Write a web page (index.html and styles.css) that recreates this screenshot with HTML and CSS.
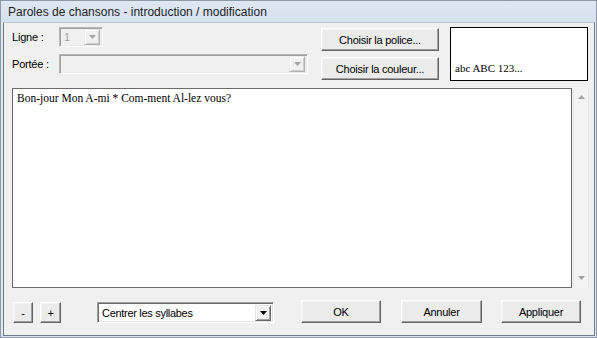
FILE: index.html
```html
<!DOCTYPE html>
<html lang="fr">
<head>
<meta charset="utf-8">
<title>Paroles de chansons</title>
<link rel="stylesheet" href="styles.css">
</head>
<body>
<div class="window">
  <div class="titlebar">Paroles de chansons - introduction / modification</div>
  <div class="client">
    <div class="top">
      <div class="fields">
        <div class="field-row">
          <span class="label">Ligne :</span>
          <div class="combo combo-disabled combo-ligne">
            <span class="combo-value">1</span>
            <span class="drop"><svg width="7" height="4" viewBox="0 0 7 4"><polygon points="0,0 7,0 3.5,4" class="arrow-dis"/></svg></span>
          </div>
        </div>
        <div class="field-row row-portee">
          <span class="label">Portée :</span>
          <div class="combo combo-disabled combo-portee">
            <span class="combo-value"></span>
            <span class="drop"><svg width="7" height="4" viewBox="0 0 7 4"><polygon points="0,0 7,0 3.5,4" class="arrow-dis"/></svg></span>
          </div>
        </div>
      </div>
      <div class="font-buttons">
        <button class="btn btn-wide">Choisir la police...</button>
        <button class="btn btn-wide">Choisir la couleur...</button>
      </div>
      <div class="preview"><span class="preview-text">abc ABC 123...</span></div>
    </div>
    <div class="editor">
      <div class="textbox">Bon-jour Mon A-mi * Com-ment Al-lez vous?</div>
      <div class="scrollbar">
        <svg width="7" height="4" viewBox="0 0 7 4"><polygon points="3.5,0 7,4 0,4" class="arrow-dis"/></svg>
        <svg width="7" height="4" viewBox="0 0 7 4"><polygon points="0,0 7,0 3.5,4" class="arrow-dis"/></svg>
      </div>
    </div>
    <div class="bottom">
      <button class="btn btn-small">-</button>
      <button class="btn btn-small btn-plus">+</button>
      <div class="combo combo-white">
        <span class="combo-value">Centrer les syllabes</span>
        <span class="drop"><svg width="7" height="4" viewBox="0 0 7 4"><polygon points="0,0 7,0 3.5,4" class="arrow"/></svg></span>
      </div>
      <button class="btn btn-dialog btn-ok">OK</button>
      <button class="btn btn-dialog btn-cancel">Annuler</button>
      <button class="btn btn-dialog btn-apply">Appliquer</button>
    </div>
  </div>
</div>
</body>
</html>
```

FILE: styles.css
```css
html, body {
  margin: 0;
  padding: 0;
  background: #ffffff;
}

.window {
  width: 597px;
  height: 338px;
  box-sizing: border-box;
  border: 1px solid #8d99a7;
  background: #dfe7f1;
  display: flex;
  flex-direction: column;
  font-family: "Liberation Sans", Arial, sans-serif;
  font-size: 11px;
  color: #000;
}

.titlebar {
  height: 21px;
  line-height: 22px;
  padding-left: 7px;
  font-size: 12px;
  color: #1e1e1e;
  background: linear-gradient(#dee7f2, #d6e1ee);
  white-space: nowrap;
}

.client {
  flex: 1;
  margin: 0 1px 1px 2px;
  border: 1px solid #6f7b89;
  border-top-color: #b9c6d5;
  background: #f0f0f0;
  display: flex;
  flex-direction: column;
}

/* ---------- top section ---------- */
.top {
  display: flex;
  align-items: flex-start;
  padding: 4px 0 0 8px;
  height: 54px;
}

.fields {
  width: 296px;
  display: flex;
  flex-direction: column;
}

.field-row {
  display: flex;
  align-items: center;
  height: 20px;
}

.row-portee {
  margin-top: 7px;
}

.label {
  width: 47px;
  letter-spacing: -0.2px;
  white-space: nowrap;
}

.combo {
  box-sizing: border-box;
  height: 20px;
  display: flex;
  align-items: center;
  border: 1px solid;
  border-color: #a0a0a0 #ffffff #ffffff #a0a0a0;
  box-shadow: inset 1px 1px 0 #696969, inset -1px -1px 0 #e3e3e3;
  padding: 1px 2px 1px 2px;
}

.combo-disabled {
  background: #f0f0f0;
  border-color: #b4b4b4 #ffffff #ffffff #b4b4b4;
  box-shadow: inset 1px 1px 0 #a0a0a0, inset -1px -1px 0 #e8e8e8;
}

.combo-ligne {
  width: 44px;
}

.combo-portee {
  width: 249px;
}

.combo-value {
  flex: 1;
  padding-left: 2px;
  white-space: nowrap;
  letter-spacing: -0.3px;
}

.combo-disabled .combo-value {
  color: #a0a0a0;
}

.drop {
  box-sizing: border-box;
  width: 16px;
  height: 16px;
  display: flex;
  align-items: center;
  justify-content: center;
  background: #f0f0f0;
  border: 1px solid;
  border-color: #e3e3e3 #696969 #696969 #e3e3e3;
  box-shadow: inset 1px 1px 0 #ffffff, inset -1px -1px 0 #a0a0a0;
}

.combo-disabled .drop {
  border-color: #ececec #b0b0b0 #b0b0b0 #ececec;
  box-shadow: inset 1px 1px 0 #ffffff, inset -1px -1px 0 #cfcfcf;
}

.arrow {
  fill: #000000;
}

.arrow-dis {
  fill: #a3a3a3;
}

.font-buttons {
  margin-left: 13px;
  padding-top: 1px;
  display: flex;
  flex-direction: column;
  gap: 6px;
}

.btn {
  box-sizing: border-box;
  font-family: "Liberation Sans", Arial, sans-serif;
  font-size: 11px;
  letter-spacing: -0.25px;
  color: #000;
  background: #ebebeb;
  border: 1px solid;
  border-color: #ffffff #646464 #646464 #ffffff;
  box-shadow: inset -1px -1px 0 #a0a0a0, inset 1px 1px 0 #f4f4f4;
  padding: 0;
  margin: 0;
  display: flex;
  align-items: center;
  justify-content: center;
}

.btn-wide {
  width: 118px;
  height: 23px;
}

.preview {
  box-sizing: border-box;
  margin-left: 11px;
  width: 138px;
  height: 54px;
  background: #ffffff;
  border: 1px solid #000000;
  display: flex;
  align-items: flex-end;
  padding: 0 0 5px 4px;
}

.preview-text {
  font-family: "Liberation Serif", "Times New Roman", serif;
  font-size: 11px;
  line-height: 13px;
  white-space: nowrap;
}

/* ---------- editor ---------- */
.editor {
  display: flex;
  margin-top: 7px;
  padding-left: 8px;
}

.textbox {
  box-sizing: border-box;
  width: 560px;
  height: 200px;
  background: #ffffff;
  border: 1px solid #6b6b6b;
  padding: 3px 4px;
  font-family: "Liberation Serif", "Times New Roman", serif;
  font-size: 11.5px;
  line-height: 13px;
  white-space: nowrap;
}

.scrollbar {
  box-sizing: border-box;
  width: 16px;
  height: 200px;
  margin-left: 1px;
  background: #f3f3f3;
  border-left: 1px solid #e9e9e9;
  border-right: 1px solid #e6e6e6;
  display: flex;
  flex-direction: column;
  justify-content: space-between;
  align-items: center;
  padding: 7px 0 8px;
}

/* ---------- bottom row ---------- */
.bottom {
  display: flex;
  align-items: flex-start;
  margin-top: 12px;
  padding-left: 9px;
  height: 23px;
}

.btn-small {
  width: 20px;
  height: 21px;
  margin-top: 2px;
}

.btn-plus {
  width: 21px;
  margin-left: 7px;
}

.combo-white {
  width: 177px;
  height: 21px;
  margin-top: 2px;
  margin-left: 36px;
  background: #ffffff;
}

.btn-dialog {
  width: 80px;
  height: 23px;
}

.btn-ok {
  margin-left: 27px;
}

.btn-cancel {
  width: 81px;
  margin-left: 20px;
}

.btn-apply {
  margin-left: 19px;
}
```
